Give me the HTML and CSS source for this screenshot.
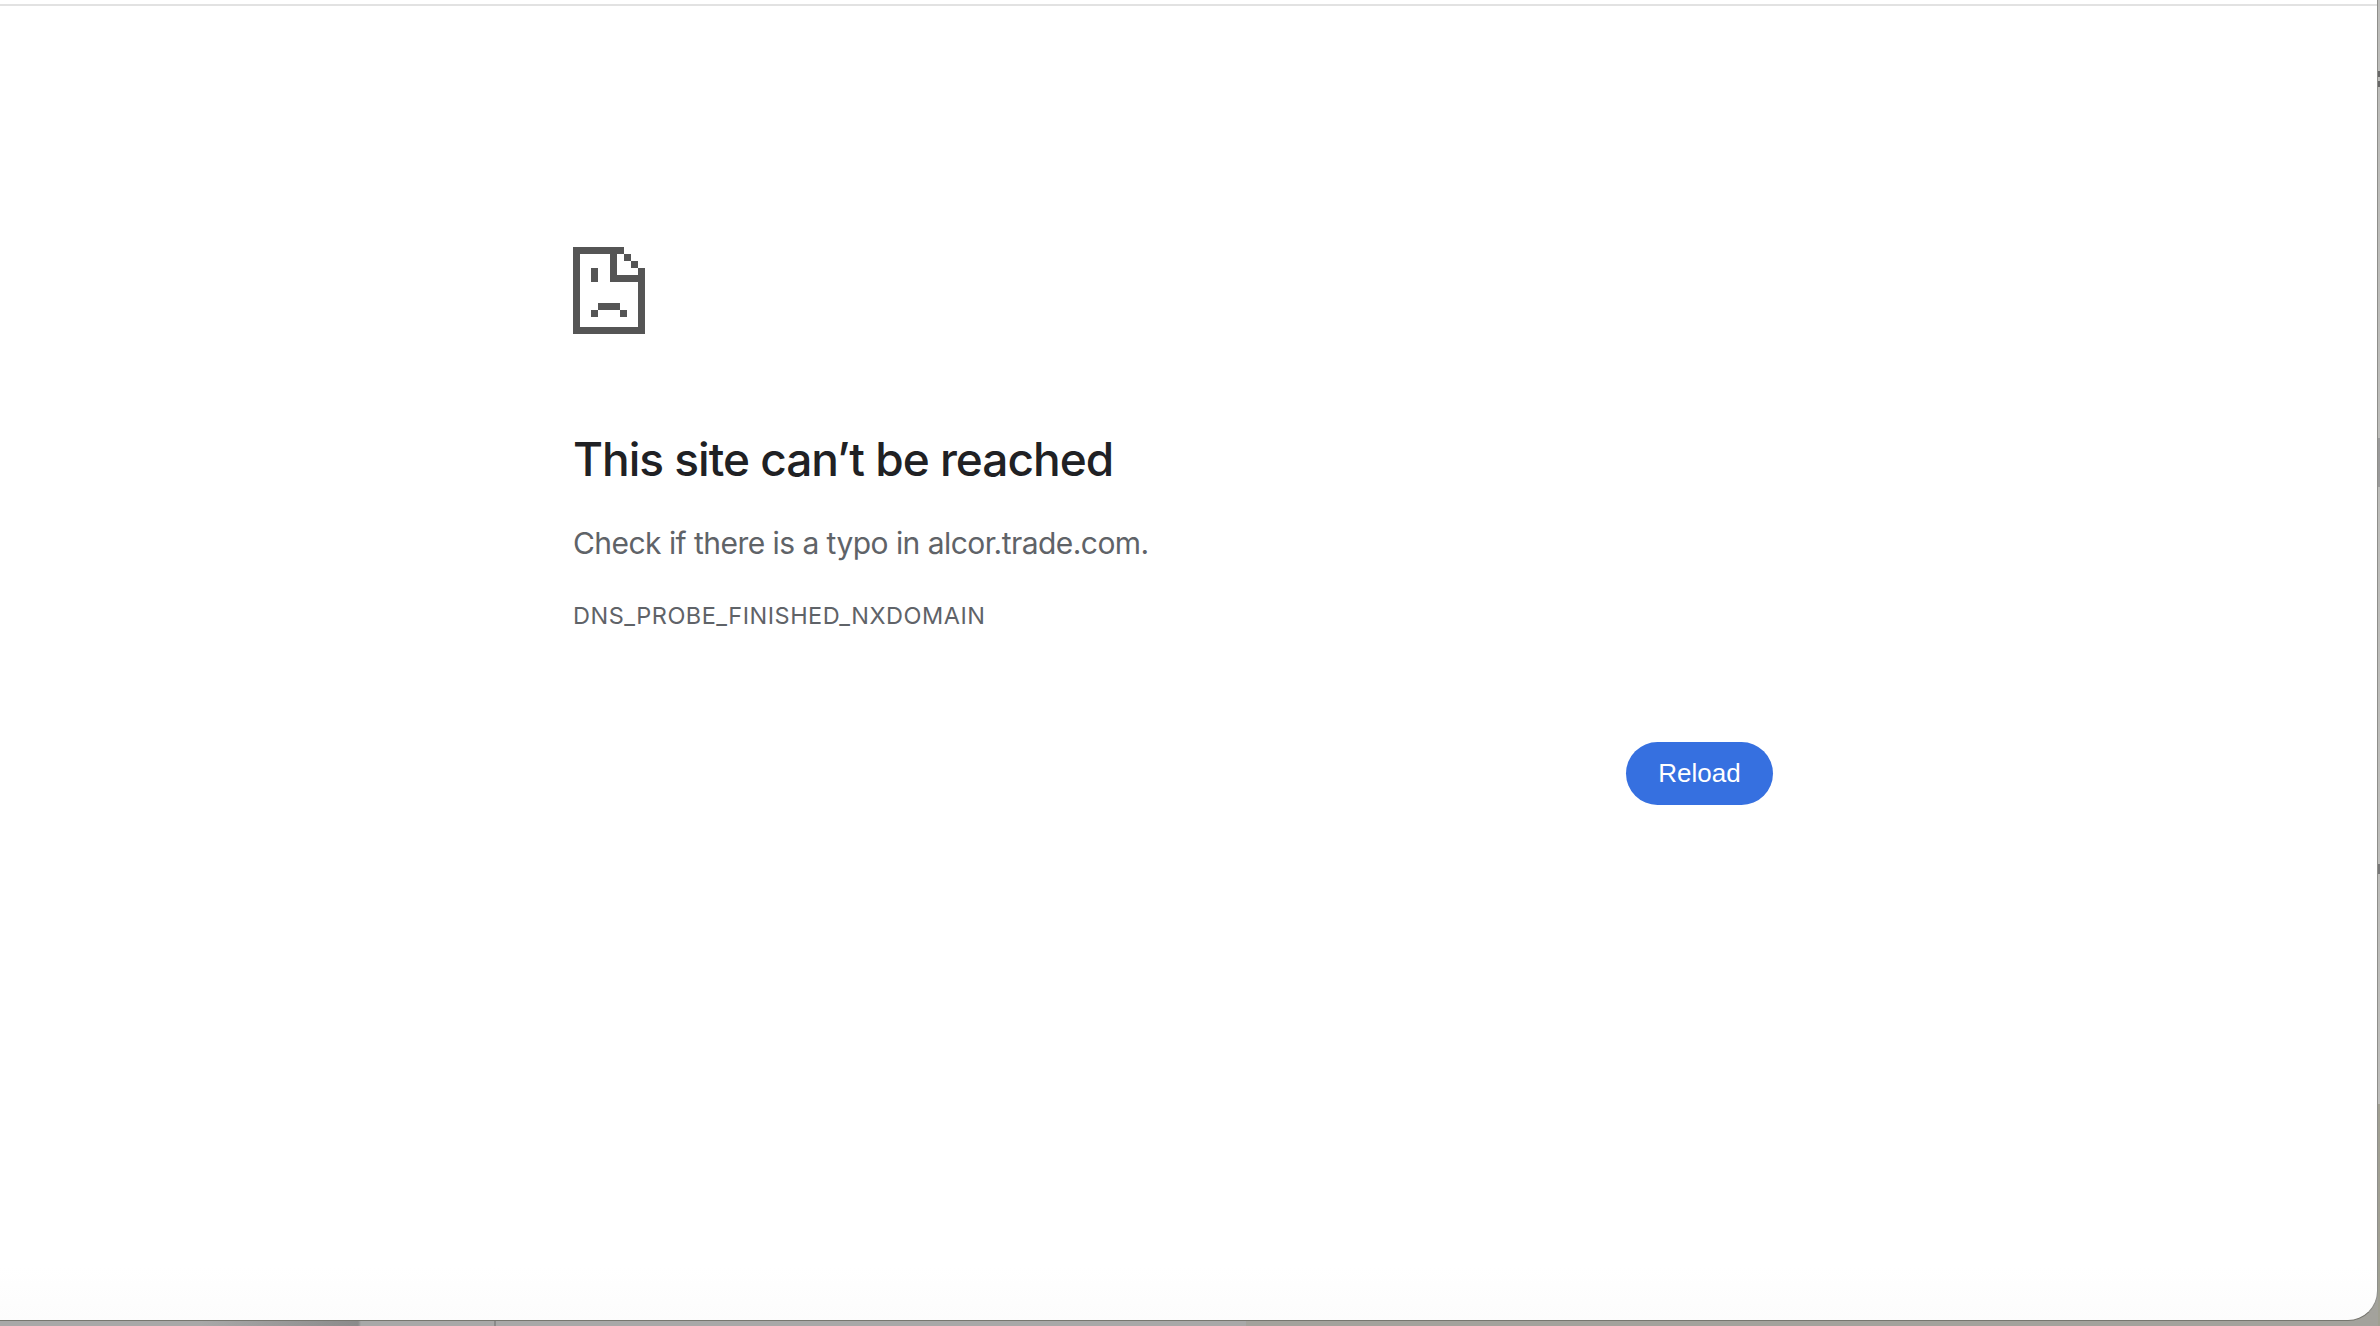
FILE: index.html
```html
<!DOCTYPE html>
<html lang="en">
<head>
    <meta charset="UTF-8" />
    <meta name="viewport" content="width=device-width, initial-scale=1.0"/>
    <title>alcor.trade.com</title>
    <link rel="stylesheet" href="styles.css">
</head>
<body>

<div class="window">
    <div class="top-rule"></div>
    <div class="error-page">
        <!-- Sad page icon -->
        <svg class="sad-icon" width="72" height="87" viewBox="0 0 72 87" shape-rendering="crispEdges">
            <rect x="0" y="0" width="7" height="87"/>
            <rect x="0" y="0" width="51" height="7"/>
            <rect x="51" y="7" width="7" height="7"/>
            <rect x="58" y="14" width="7" height="7"/>
            <rect x="65" y="21" width="7" height="66"/>
            <rect x="0" y="80" width="72" height="7"/>
            <rect x="37" y="7" width="7" height="28"/>
            <rect x="37" y="28" width="35" height="7"/>
            <rect x="18" y="21" width="7" height="14"/>
            <rect x="25" y="56" width="22" height="7"/>
            <rect x="18" y="63" width="7" height="7"/>
            <rect x="47" y="63" width="7" height="7"/>
        </svg>

        <h1>This site can’t be reached</h1>
        <p class="message">Check if there is a typo in alcor.trade.com.</p>
        <div class="error-code">DNS_PROBE_FINISHED_NXDOMAIN</div>

        <div class="actions">
            <button class="reload">Reload</button>
        </div>
    </div>
</div>

</body>
</html>
```

FILE: styles.css
```css
html, body {
    height: 100%;
}
body {
    margin: 0;
    overflow: hidden;
    font-family: Inter, "Liberation Sans", sans-serif;
    /* desktop showing behind the browser window */
    background:
        linear-gradient(#bdbdba 0, #bdbdba 71px, #666 71px, #666 77px, #bdbdba 77px, #bdbdba 81px, #666 81px, #666 87px, #bdbdba 87px, #bdbdba 438px, #9a9a9a 438px, #9a9a9a 487px, #bdbdba 487px, #bdbdba 864px, #777 864px, #777 874px, #bdbdba 874px, #bdbdba 1104px, #a09f92 1104px) right top / 2px 100% no-repeat,
        linear-gradient(90deg, #a8a8a8 0, #a8a8a8 200px, #8b8b8b 358px, #a8a8a8 361px, #a8a8a8 494px, #8a8a8a 494px, #8a8a8a 496px, #a8a8a8 496px, #a8a8a8 1246px, #a3a29c 1246px);
}
.window {
    box-sizing: border-box;
    height: 1321px;
    margin-right: 2px;
    background: linear-gradient(#fff 96%, #fcfcfc);
    border-bottom: 1px solid #77766f;
    border-right: 1px solid #8e8e8a;
    border-bottom-right-radius: 30px;
}
.top-rule {
    height: 2px;
    border-top: 4px solid #fff;
    background-color: #e2e2e2;
}
.error-page {
    width: 1200px;
    margin-left: 573px;
    padding-top: 241px;
}
.sad-icon {
    display: block;
    fill: #555;
}
h1 {
    margin: 97px 0 0;
    font-size: 46px;
    font-weight: 500;
    letter-spacing: -1px;
    line-height: 56px;
    color: #202124;
}
.message {
    margin: 36px 0 0;
    font-size: 30px;
    letter-spacing: -0.55px;
    line-height: 40px;
    color: #5f6368;
}
.error-code {
    margin-top: 38px;
    font-size: 23.5px;
    letter-spacing: 0.5px;
    line-height: 30px;
    color: #5f6368;
}
.actions {
    display: flex;
    justify-content: flex-end;
    margin-top: 111px;
}
.reload {
    width: 147px;
    height: 63px;
    border: none;
    border-radius: 32px;
    background-color: #3670e0;
    color: white;
    font-family: "Liberation Sans", sans-serif;
    font-size: 26px;
    cursor: pointer;
}
```
